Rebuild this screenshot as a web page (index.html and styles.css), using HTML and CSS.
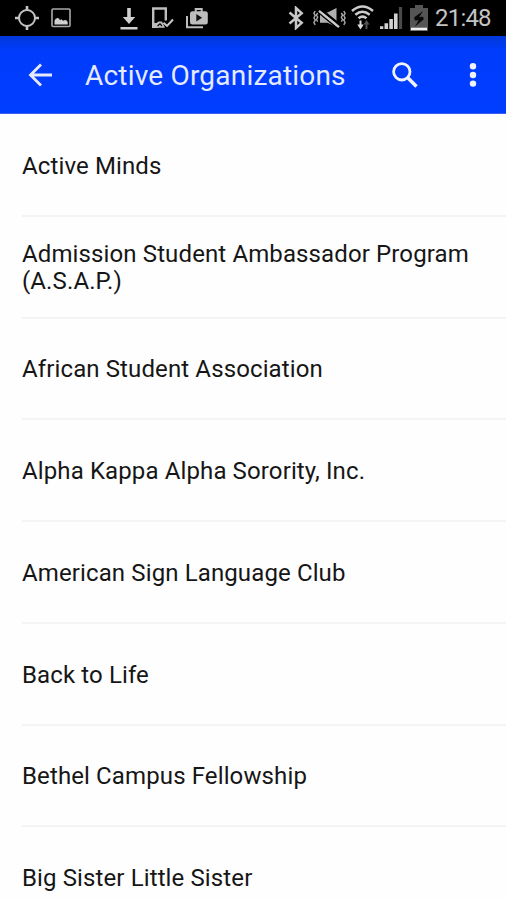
FILE: index.html
```html
<!DOCTYPE html>
<html lang="en">
<head>
  <meta charset="UTF-8" />
  <meta name="viewport" content="width=device-width, initial-scale=1.0" />
  <title>Active Organizations</title>
  <link rel="stylesheet" href="styles.css">
</head>
<body>
  <div class="status-bar">
    <div class="notifications">
      <svg class="icon-gps" width="24" height="26" viewBox="0 0 24 26" fill="none" stroke="#c4c4c4">
        <circle cx="12" cy="13" r="8" stroke-width="2" />
        <path d="M12 1v5M12 20v5M0 13h5M19 13h5" stroke-width="2.6" />
      </svg>
      <svg class="icon-image" width="20" height="20" viewBox="0 0 20 20">
        <rect x="1" y="1" width="18" height="17.5" rx="1" fill="none" stroke="#a8a8a8" stroke-width="1.6" />
        <path d="M3.5 16.5v-4q1-2.5 3-2.5 1.7 0 2.5 2.2l1.5-1 1.5 1.5 2-.8q2 0 2.7 2v2.6z" fill="#d0d0d0" />
      </svg>
      <svg class="icon-download" width="18" height="23" viewBox="0 0 18 23" fill="#cfcfcf">
        <path d="M7.2 1h3.6v9h4.4L9 17 2.8 10h4.4zM.5 20h17v2.4H.5z" />
      </svg>
      <svg class="icon-tablet" width="22" height="22" viewBox="0 0 22 22">
        <path d="M6 19.7H1.2V1.5h12.6v12" fill="none" stroke="#bdbdbd" stroke-width="2.4" />
        <path d="M1 16h3.5l2-1.5h3.5L13 20.8H1z" fill="#bdbdbd" />
        <path d="M5.5 19l2.5-2.2 2 2.2" fill="none" stroke="#000" stroke-width="1.2" />
        <path d="M11.5 15.7l3.5 3.2 6-6.4" fill="none" stroke="#c8c8c8" stroke-width="2" />
      </svg>
      <svg class="icon-bag" width="22" height="22" viewBox="0 0 22 22">
        <path d="M1 9v11.2h16" fill="none" stroke="#bdbdbd" stroke-width="2" />
        <path d="M9.7 5V2h6v3" fill="none" stroke="#bdbdbd" stroke-width="2" />
        <rect x="4" y="4.2" width="17.8" height="13.4" rx="2.5" fill="#bdbdbd" />
        <path d="M10.3 7v7.6l5.8-3.8z" fill="#111" />
      </svg>
    </div>
    <div class="system">
      <svg class="icon-bluetooth" width="16" height="24" viewBox="0 0 16 24" fill="none" stroke="#c8c8c8" stroke-width="2.5">
        <path d="M1.5 6.5l12.2 10.3L8 22V2l5.7 5.2L1.5 17.5" />
      </svg>
      <svg class="icon-vibrate" width="33" height="22" viewBox="0 0 33 22">
        <path d="M2.2 4l-1.3 2.3 1.3 2.3-1.3 2.3 1.3 2.3-1.3 2.3 1.3 2.3M4.7 6L3.4 8l1.3 2.2-1.3 2.3 1.3 2.2M28.3 6L29.6 8l-1.3 2.2 1.3 2.3-1.3 2.2M30.8 4l1.3 2.3-1.3 2.3 1.3 2.3-1.3 2.3 1.3 2.3-1.3 2.3" fill="none" stroke="#aaa" stroke-width="1.4" />
        <path d="M7 5.5h7.5L23.5 1v19l-9-4.2H7z" fill="#b0b0b0" />
        <path d="M8.2 2.8L27 18" stroke="#000" stroke-width="2.4" />
        <path d="M6 5.8l18 15" stroke="#000" stroke-width="1.6" />
        <path d="M6 3.8l20 16.4" stroke="#ccc" stroke-width="2.3" />
      </svg>
      <svg class="icon-wifi" width="23" height="26" viewBox="0 0 23 26" fill="none">
        <path d="M1 6q10.5-9 21 0M4.3 9.7q7.2-6 14.4 0M7.5 13.2q4-3.2 8 0" stroke="#ccc" stroke-width="2.5" />
        <path d="M9.5 15.5v5" stroke="#ddd" stroke-width="2" />
        <path d="M6.3 19.5h6.4l-3.2 5z" fill="#ddd" />
        <path d="M15.5 24v-5" stroke="#555" stroke-width="2" />
        <path d="M12.5 19.5h6l-3-4.5z" fill="#555" />
      </svg>
      <svg class="icon-signal" width="23" height="22" viewBox="0 0 23 22">
        <path d="M0 19.3h3.3V22H0zM4.5 16.3h3.6V22H4.5zM9.3 12h3.6v10H9.3zM14 6.5h3.6V22H14z" fill="#d2d2d2" />
        <path d="M18.9 0h3.2v22h-3.2z" fill="#4a4a4a" />
      </svg>
      <svg class="icon-battery" width="18" height="26" viewBox="0 0 18 26">
        <path d="M5 0h8v3h5v23H0V3h5z" fill="#555" />
        <path d="M13 6L4 12.5l1 3 3.7-.3L5 21.5l8.8-7.2-.8-2.5-3.7.3z" fill="#080808" />
        <path d="M1 22.7h16v2.5H1z" fill="#eee" />
      </svg>
      <span class="clock">21:48</span>
    </div>
  </div>

  <header class="toolbar">
    <svg class="icon-back" width="24" height="24" viewBox="0 0 24 24" fill="none" stroke="#e6eaff" stroke-width="2.8">
      <path d="M13 1.5L2.5 12 13 22.5M2.5 12H24" />
    </svg>
    <h1>Active Organizations</h1>
    <svg class="icon-search" width="26" height="26" viewBox="0 0 26 26" fill="none" stroke="#f1f3ff">
      <circle cx="9.8" cy="9.8" r="8.2" stroke-width="2.8" />
      <path d="M15.5 15.5l9 9" stroke-width="3.5" />
    </svg>
    <svg class="icon-more" width="8" height="24" viewBox="0 0 8 24" fill="#f1f3ff">
      <circle cx="4" cy="3.2" r="3.2" />
      <circle cx="4" cy="12" r="3.2" />
      <circle cx="4" cy="20.6" r="3.2" />
    </svg>
  </header>

  <ul class="org-list">
    <li>Active Minds</li>
    <li>Admission Student Ambassador Program (A.S.A.P.)</li>
    <li>African Student Association</li>
    <li>Alpha Kappa Alpha Sorority, Inc.</li>
    <li>American Sign Language Club</li>
    <li>Back to Life</li>
    <li>Bethel Campus Fellowship</li>
    <li>Big Sister Little Sister</li>
  </ul>
</body>
</html>
```
FILE: styles.css
```css
* { box-sizing: border-box; }
body { font-family: Roboto, sans-serif; margin: 0; height: 900px; overflow: hidden; background: #fefefe; color: #161616; }
svg { display: block; flex: none; }

.status-bar { display: flex; justify-content: space-between; height: 36px; padding: 0 14px 0 15px; background: #000; }
.notifications, .system { display: flex; align-items: center; }
.icon-image { margin-left: 12px; }
.icon-download { margin-left: 49px; }
.icon-tablet { margin-left: 14px; }
.icon-bag { margin-left: 12px; }
.icon-vibrate { margin-left: 9px; }
.icon-wifi { margin-left: 5px; }
.icon-signal { margin-left: 6px; }
.icon-battery { margin-left: 7px; }
.clock { width: 57px; margin-left: 7px; font-size: 24px; line-height: 36px; letter-spacing: -0.8px; color: #c4c4c4; white-space: nowrap; }

.toolbar { display: flex; align-items: center; height: 78px; padding: 0 29px 0 28px; background: linear-gradient(#0238d8, #003cfc 14px, #003eff); border-bottom: 1px solid #3d5cf0; }
.toolbar h1 { flex: 1; margin: 0 0 0 33px; padding-top: 3px; font-size: 28px; font-weight: 400; line-height: 36px; letter-spacing: 0.2px; color: #e6eaff; white-space: nowrap; }
.icon-more { margin-left: 51px; }

.org-list { list-style: none; margin: 0; padding: 1px 0 0 22px; }
.org-list li { display: flex; align-items: center; height: 101.75px; padding: 3px 20px 0 0; border-bottom: 2px solid #f4f4f4; font-size: 24px; line-height: 27px; letter-spacing: 0.12px; }
```
